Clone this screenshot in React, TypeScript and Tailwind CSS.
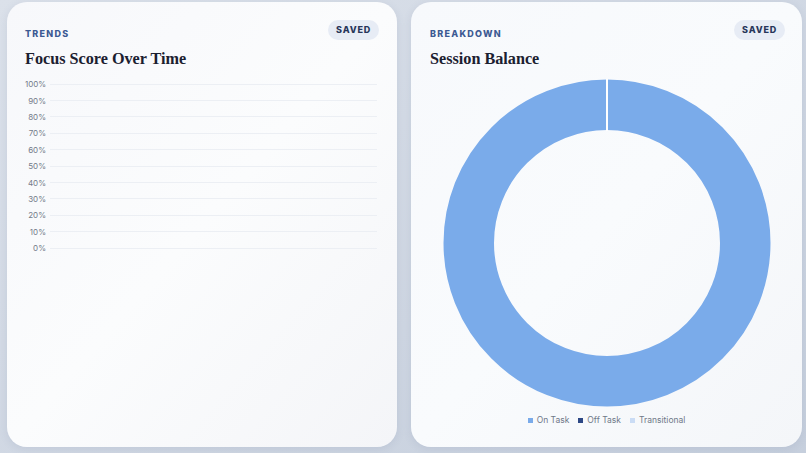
import React from "react";

const ticks = ["100%", "90%", "80%", "70%", "60%", "50%", "40%", "30%", "20%", "10%", "0%"];

function Header({ label, title }: { label: string; title: string }) {
  return (
    <div className="flex items-start justify-between">
      <div className="flex flex-col">
        <div
          className="mt-[8px] text-[9px] leading-[12px] font-extrabold tracking-[0.14em] text-[#3d5a93]"
          style={{ fontFamily: "Inter, sans-serif" }}
        >
          {label}
        </div>
        <div
          className="mt-[8px] text-[16.2px] leading-[22px] font-bold text-[#1b2030]"
          style={{ fontFamily: '"Liberation Serif", serif' }}
        >
          {title}
        </div>
      </div>
      <div
        className="h-[20px] px-[8px] mr-[-2px] flex items-center rounded-full bg-[#e7ecf5] text-[9px] font-extrabold tracking-[0.09em] text-[#27365a]"
        style={{ fontFamily: "Inter, sans-serif" }}
      >
        SAVED
      </div>
    </div>
  );
}

export default function App() {
  return (
    <div className="w-[806px] h-[453px] overflow-hidden bg-gradient-to-br from-[#dbe1ea] to-[#c6cfdd] pt-[2px] pl-[7px] pr-[4px] pb-[6px] flex gap-[14px]">
      <div className="w-[390px] h-[445px] rounded-[20px] bg-gradient-to-br from-[#f7f8fb] via-[#fbfcfd] to-[#f4f5f8] shadow-[0_2px_8px_rgba(80,100,140,0.12)] pt-[18px] pl-[18px] pr-[20px]">
        <Header label="TRENDS" title="Focus Score Over Time" />
        <div className="mt-[6px] flex flex-col" style={{ fontFamily: "Inter, sans-serif" }}>
          {ticks.map((t) => (
            <div key={t} className="h-[16.4px] flex items-center">
              <div className="w-[21px] text-right text-[8px] text-[#737a89] leading-none">{t}</div>
              <div className="ml-[4px] flex-1 h-px bg-[#eceff4]" />
            </div>
          ))}
        </div>
      </div>
      <div className="w-[391px] h-[445px] rounded-[20px] bg-gradient-to-br from-[#f7f9fc] via-[#f9fbfd] to-[#f4f6f9] shadow-[0_2px_8px_rgba(80,100,140,0.12)] pt-[18px] pl-[19px] pr-[19px] flex flex-col">
        <Header label="BREAKDOWN" title="Session Balance" />
        <div className="mt-[9px] flex justify-center">
          <svg width="328" height="328" viewBox="0 0 328 328">
            <circle cx="164" cy="164" r="138.25" fill="none" stroke="#7aabea" strokeWidth="50.5" />
            <line x1="164" y1="0" x2="164" y2="52" stroke="#ffffff" strokeWidth="2" />
          </svg>
        </div>
        <div
          className="mt-[8px] flex justify-center items-center gap-[9px] text-[8.5px] leading-[10px] text-[#6f7888]"
          style={{ fontFamily: "Inter, sans-serif" }}
        >
          <div className="flex items-center gap-[4px]">
            <span className="w-[5px] h-[5px] bg-[#7aabea]" />
            <span>On Task</span>
          </div>
          <div className="flex items-center gap-[4px]">
            <span className="w-[5px] h-[5px] bg-[#2d4885]" />
            <span>Off Task</span>
          </div>
          <div className="flex items-center gap-[4px]">
            <span className="w-[5px] h-[5px] bg-[#cadcf5]" />
            <span>Transitional</span>
          </div>
        </div>
      </div>
    </div>
  );
}
